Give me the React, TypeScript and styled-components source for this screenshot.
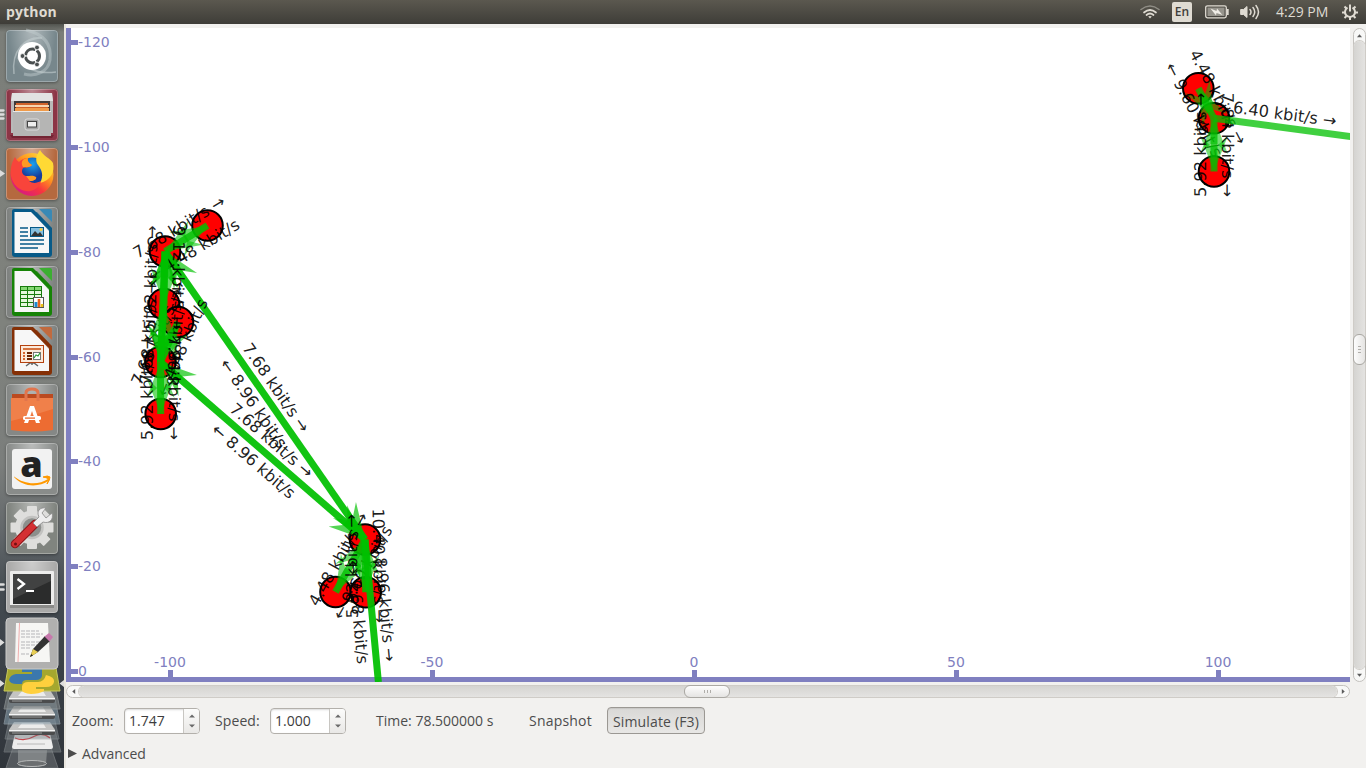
import React from "react";
import styled, { createGlobalStyle } from "styled-components";

const GlobalStyle = createGlobalStyle`
  * { box-sizing: border-box; }
  html, body { margin: 0; padding: 0; overflow: hidden; }
  body { font-family: "Open Sans", "Noto Sans", sans-serif; background: #f1f0ee; }
`;

const Desktop = styled.div`
  width: 1366px;
  height: 768px;
  display: flex;
  flex-direction: column;
  background: #f2f1ef;
  overflow: hidden;
`;

const TopBar = styled.header`
  height: 24px;
  flex: none;
  display: flex;
  justify-content: space-between;
  align-items: center;
  padding: 0 8px 0 6px;
  color: #dfdbd2;
  background: linear-gradient(#5b584f, #3e3d38);
`;

const AppTitle = styled.span`
  font: 700 14px/24px "Open Sans", sans-serif;
  letter-spacing: 0.15px;
`;

const Indicators = styled.div`
  display: flex;
  align-items: center;
  height: 24px;
`;

const Indicator = styled.span<{ $gap: number }>`
  display: flex;
  margin-left: ${(p) => p.$gap}px;
`;

const Keyboard = styled.span`
  width: 20px;
  height: 20px;
  margin-left: 12px;
  border-radius: 2px;
  background: #dfdbd2;
  color: #3f3e39;
  font: 600 12px/20px "Open Sans", sans-serif;
  text-align: center;
`;

const Clock = styled.span`
  width: 54px;
  margin-left: 15px;
  font: 400 14px/24px "Open Sans", sans-serif;
  letter-spacing: 0;
  white-space: nowrap;
`;

const Body = styled.div`
  flex: 1;
  display: flex;
  min-height: 0;
`;

const Launcher = styled.nav`
  width: 66px;
  flex: none;
  display: flex;
  flex-direction: column;
  gap: 7px;
  padding: 6px 0 0 6px;
  border-right: 2px solid #e9e6df;
  background: linear-gradient(#52544f 0, #7b7e79 8px, #7f827d 300px, #7b7e7c 440px, #62676a 510px, #444b51 570px, #3a4047 650px, #30353b 744px);
`;

const Tile = styled.div<{ $bg: string }>`
  position: relative;
  width: 52px;
  height: 52px;
  flex: none;
  border-radius: 4px;
  background: radial-gradient(ellipse at 50% 0, rgba(255,255,255,.42), rgba(255,255,255,0) 65%), ${(p) => p.$bg};
  box-shadow: inset 0 0 0 1px rgba(255,255,255,.28), 0 1px 3px rgba(0,0,0,.35);
`;

const Pips = styled.span`
  position: absolute;
  left: -6px;
  top: 20px;
  width: 5px;
  height: 14px;
  display: flex;
`;

const Folded = styled.div`
  margin: -3px 0 0 -6px;
  height: 102px;
`;

const Main = styled.main`
  flex: 1;
  display: flex;
  flex-direction: column;
  padding-top: 4px;
  min-width: 0;
`;

const ViewRow = styled.div`
  display: flex;
  height: 654px;
  gap: 3px;
`;

const Plot = styled.svg`
  width: 1284px;
  height: 654px;
  flex: none;
  background: #fff;
  font-family: "DejaVu Sans", sans-serif;
`;

const ScrollBar = styled.div<{ $vertical?: boolean }>`
  display: flex;
  flex: none;
  flex-direction: ${(p) => (p.$vertical ? "column" : "row")};
  align-items: center;
  justify-content: space-between;
  width: ${(p) => (p.$vertical ? "13px" : "1284px")};
  height: ${(p) => (p.$vertical ? "654px" : "13px")};
  margin-top: ${(p) => (p.$vertical ? "0" : "3px")};
  border: 1px solid #c3c1bd;
  border-radius: 7px;
  background: #f8f8f7;
`;

const Stepper = styled.span<{ $vertical?: boolean }>`
  display: flex;
  align-items: center;
  justify-content: center;
  flex: none;
  width: ${(p) => (p.$vertical ? "11px" : "12px")};
  height: ${(p) => (p.$vertical ? "12px" : "11px")};
`;

const Trough = styled.div<{ $vertical?: boolean }>`
  flex: 1;
  align-self: stretch;
  display: flex;
  align-items: center;
  flex-direction: ${(p) => (p.$vertical ? "column" : "row")};
  padding: ${(p) => (p.$vertical ? "293px 0 0" : "0 0 0 605px")};
  border-radius: 6px;
  background: linear-gradient(${(p) => (p.$vertical ? "to right" : "to bottom")}, #d5d4d1, #e4e3e1);
  box-shadow: 0 0 0 1px #cfccc7;
`;

const Thumb = styled.div<{ $vertical?: boolean }>`
  flex: none;
  display: flex;
  gap: 2px;
  align-items: center;
  justify-content: center;
  flex-direction: ${(p) => (p.$vertical ? "column" : "row")};
  width: ${(p) => (p.$vertical ? "13px" : "46px")};
  height: ${(p) => (p.$vertical ? "31px" : "13px")};
  margin: ${(p) => (p.$vertical ? "0 -1px" : "-1px 0")};
  border: 1px solid #aaa8a3;
  border-radius: 6px;
  background: linear-gradient(${(p) => (p.$vertical ? "to right" : "to bottom")}, #fdfdfd, #e5e4e2);
`;

const Grip = styled.i<{ $vertical?: boolean }>`
  width: ${(p) => (p.$vertical ? "3px" : "1px")};
  height: ${(p) => (p.$vertical ? "1px" : "3px")};
  background: #b0aeaa;
`;

const Controls = styled.div`
  display: flex;
  align-items: center;
  height: 27px;
  margin-top: 9px;
  padding-left: 6px;
`;

const Label = styled.span<{ $w: number; $track?: number }>`
  width: ${(p) => p.$w}px;
  font-size: 14px;
  line-height: 27px;
  color: #4c4c4c;
  letter-spacing: ${(p) => p.$track ?? 0}px;
  white-space: nowrap;
`;

const SpinBox = styled.div<{ $after: number }>`
  display: flex;
  width: 76px;
  height: 26px;
  margin-right: ${(p) => p.$after}px;
  border: 1px solid #b3b0ab;
  border-radius: 4px;
  background: #fff;
  overflow: hidden;
  box-shadow: inset 0 1px 2px rgba(0,0,0,.15);
`;

const SpinValue = styled.span`
  width: 58px;
  padding-left: 4px;
  font-size: 14px;
  line-height: 24px;
  color: #3c3c3c;
`;

const SpinButtons = styled.span`
  flex: 1;
  display: flex;
  align-items: center;
  justify-content: center;
  border-left: 1px solid #c8c6c2;
  background: linear-gradient(#fcfcfb, #e9e8e6);
`;

const SimulateButton = styled.button`
  width: 98px;
  height: 27px;
  padding: 0;
  border: 1px solid #9b9893;
  border-radius: 4px;
  background: linear-gradient(#d9d8d6, #e8e7e5);
  box-shadow: inset 0 1px 1px rgba(0,0,0,.08);
  color: #4c4c4c;
  font: 400 14px/27px "Open Sans", sans-serif;
  letter-spacing: 0.15px;
  white-space: nowrap;
`;

const Advanced = styled.div`
  display: flex;
  align-items: center;
  gap: 5px;
  height: 20px;
  margin-top: 9px;
  padding-left: 2px;
  font-size: 14px;
  color: #4c4c4c;
`;

type Pt = [number, number];
const AXIS = "#8080c0";

interface LinkSpec {
  a: Pt;
  b: Pt;
  alpha: number;
  upper?: string;
  lower?: string;
  openEnd?: boolean;
}

const nodes: Pt[] = [
  [207.5, 225.5], [165, 251.5], [164, 304], [178, 322], [160.5, 362], [160.7, 414],
  [365, 539.5], [335.5, 592], [365.7, 592.3],
  [1198.3, 88.3], [1214, 118.3], [1214, 171.5],
];

const links: LinkSpec[] = [
  { a: nodes[1], b: nodes[6], alpha: 0.93, upper: "7.68 kbit/s →", lower: "← 8.96 kbit/s" },
  { a: nodes[4], b: nodes[6], alpha: 0.93, upper: "7.68 kbit/s →", lower: "← 8.96 kbit/s" },
  { a: nodes[4], b: nodes[3], alpha: 0.8, upper: "7.68 kbit/s →", lower: "← 4.48 kbit/s" },
  { a: nodes[4], b: nodes[2], alpha: 0.85, upper: "7.68 kbit/s →", lower: "8.96 kbit/s →" },
  { a: nodes[1], b: nodes[0], alpha: 0.8, upper: "7.68 kbit/s →", lower: "← 4.48 kbit/s" },
  { a: nodes[4], b: nodes[1], alpha: 0.9 },
  { a: nodes[5], b: nodes[4], alpha: 0.8, upper: "5.92 kbit/s →", lower: "7.84 kbit/s →" },
  { a: nodes[2], b: nodes[1], alpha: 0.85, upper: "5.92 kbit/s →", lower: "9.12 kbit/s →" },
  { a: nodes[7], b: nodes[6], alpha: 0.8, upper: "4.48 kbit/s →", lower: "← 9.60 kbit/s" },
  { a: nodes[8], b: nodes[6], alpha: 0.85, upper: "5.92 kbit/s →", lower: "10.40 kbit/s →" },
  { a: nodes[6], b: [378.4, 682], alpha: 0.93, upper: "8.96 kbit/s →", lower: "← 7.68 kbit/s", openEnd: true },
  { a: nodes[9], b: nodes[10], alpha: 0.75, upper: "4.48 kbit/s →", lower: "← 9.60 kbit/s" },
  { a: nodes[11], b: nodes[10], alpha: 0.75, upper: "5.92 kbit/s →", lower: "7.84 kbit/s →" },
  { a: nodes[10], b: [1352, 136.8], alpha: 0.75, upper: "6.40 kbit/s →", openEnd: true },
];

const Head = ({ alpha }: { alpha: number }) => (
  <path d="M0 0L36 -14L26 -3.5V3.5L36 14Z" fill="#00c000" opacity={alpha * 0.72} />
);

const Link = ({ a, b, alpha, upper, lower, openEnd }: LinkSpec) => {
  const dx = b[0] - a[0];
  const dy = b[1] - a[1];
  const len = Math.hypot(dx, dy);
  const angle = (Math.atan2(dy, dx) * 180) / Math.PI;
  const flip = Math.abs(Math.abs(angle) - 90) < 3;
  return (
    <g transform={`translate(${a[0]} ${a[1]}) rotate(${angle})`}>
      <rect x="0" y="-3.5" width={len} height="7" fill="#00c000" opacity={alpha} />
      {!openEnd && <Head alpha={alpha} />}
      {!openEnd && (
        <g transform={`translate(${len} 0) rotate(180)`}>
          <Head alpha={alpha} />
        </g>
      )}
      <g fontSize="16.2" textAnchor="middle" fill="#000" fillOpacity="0.88" textRendering="geometricPrecision">
        {upper && <text x={len / 2} y="-8">{upper}</text>}
        {lower && (
          <text transform={`translate(${len / 2} ${flip ? 8 : 19.5}) rotate(${flip ? 180 : 0})`}>{lower}</text>
        )}
      </g>
    </g>
  );
};

const yTicks: [number, string][] = [
  [42.5, "-120"], [147.5, "-100"], [252.5, "-80"], [357.5, "-60"], [461.5, "-40"], [566.5, "-20"], [671.5, "0"],
];
const xTicks: [number, string][] = [
  [170.5, "-100"], [432.5, "-50"], [694.5, "0"], [956.5, "50"], [1218.5, "100"],
];

const Topology = () => (
  <Plot viewBox="66 28 1284 654">
    <g fill={AXIS} fontSize="14">
      <rect x="66" y="28" width="5" height="654" />
      <rect x="66" y="677" width="1284" height="5" />
      {yTicks.map(([y, t]) => (
        <g key={t}>
          <rect x="71" y={y - 2.5} width="7" height="5" />
          <text x="78" y={y + 4.5}>{t}</text>
        </g>
      ))}
      {xTicks.map(([x, t]) => (
        <g key={t}>
          <rect x={x - 2.5} y="670" width="5" height="7" />
          <text x={x - 0.5} y="667" textAnchor="middle">{t}</text>
        </g>
      ))}
    </g>
    {nodes.map(([x, y]) => (
      <circle key={`${x}-${y}`} cx={x} cy={y} r="15.3" fill="#f00" stroke="#000" strokeWidth="2" />
    ))}
    {links.map((l, i) => <Link key={i} {...l} />)}
  </Plot>
);

const Svg52 = ({ children }: { children: React.ReactNode }) => (
  <svg width="52" height="52" viewBox="0 0 52 52" overflow="visible" display="block">{children}</svg>
);

const DashIcon = () => (
  <Svg52>
    <path d="M8 44C5 20 20 6 36 8C24 8 14 14 12 28C20 40 34 44 50 42" fill="none" stroke="#c4cfd1" strokeWidth="1.5" opacity=".6" />
    <path d="M20 0C38 4 46 14 44 30C42 42 30 47 18 44" fill="none" stroke="#c4cfd1" strokeWidth="3" opacity=".45" />
    <circle cx="26" cy="26" r="14" fill="#fff" />
    <circle cx="26.5" cy="26" r="7" fill="none" stroke="#4a4f50" strokeWidth="3" strokeDasharray="13.2 1.4" strokeDashoffset="6.6" />
    {[[16.5, 26], [31, 17.5], [31, 34.5]].map(([x, y]) => (
      <circle key={y} cx={x} cy={y} r="2.4" fill="#4a4f50" stroke="#fff" strokeWidth=".8" />
    ))}
  </Svg52>
);

const FilesIcon = () => (
  <Svg52>
    <path d="M4 46H48L46 49H6Z" fill="#5a1522" opacity=".5" />
    <path d="M6 4H46L47 12V44H5V12Z" fill="#b9b9b9" />
    <path d="M6 4H46L47 12H5Z" fill="#e2e2e2" />
    <rect x="8" y="12" width="36" height="12" fill="#3f3a38" />
    <rect x="10" y="14" width="32" height="10" fill="#d0632a" />
    <rect x="9" y="16" width="34" height="2" fill="#f6d5b0" />
    <rect x="9" y="19" width="34" height="3" fill="#f09b4a" />
    <path d="M7 22H45V47H7Z" fill="#b5b5b4" />
    <path d="M7 22H45V23H7Z" fill="#e9e9e9" />
    <rect x="19" y="30" width="14" height="11" rx="2" fill="#a3a3a3" stroke="#dcdcdc" />
    <rect x="21.5" y="32.5" width="9" height="5.5" fill="#eee" stroke="#444" />
  </Svg52>
);

const FirefoxIcon = () => (
  <Svg52>
    <defs>
      <linearGradient id="fox" x1=".8" y1="0" x2=".1" y2=".9">
        <stop offset="0" stopColor="#ffe141" />
        <stop offset=".35" stopColor="#ff9a1e" />
        <stop offset=".65" stopColor="#f8353d" />
        <stop offset="1" stopColor="#d3178a" />
      </linearGradient>
      <radialGradient id="globe" cx=".5" cy=".25">
        <stop offset="0" stopColor="#18a4f0" />
        <stop offset="1" stopColor="#173c9b" />
      </radialGradient>
    </defs>
    <circle cx="26" cy="26.5" r="21.5" fill="url(#fox)" />
    <circle cx="26.5" cy="23" r="13.5" fill="url(#globe)" />
    <path d="M34 2C30 7 29 13 32 17C36 22 38 28 34 35C45 32 49 24 47 15C44 10 37 8 34 2Z" fill="#ffd934" />
    <path d="M9 9C6 14 4 20 5 28C7 37 13 42 20 43C28 44 34 39 35 33C31 35 27 36 23 33C28 33 31 31 30 29C26 28 23 29 20 28C16 27 15 23 17 20C20 19 24 20 26 17C23 15 21 13 22 10C18 10 15 12 13 14C11 13 10 11 9 9Z" fill="#f8443b" />
    <path d="M22 10C17 10 14 14 17 19C20 19 24 20 26 17C23 15 21 13 22 10ZM20 28C25 28 27 27 30 29C31 31 28 33 24 33Z" fill="#ff9a24" />
  </Svg52>
);

const OfficeIcon = ({ dark, fold, children }: { dark: string; fold: string; children: React.ReactNode }) => (
  <Svg52>
    <path d="M8 2H27L46 21V47Q46 50 43 50H9Q6 50 6 47V4Q6 2 8 2Z" fill={dark} />
    <path d="M8.500 5H25L43 23V46H8.500Z" fill="#f7f7f7" />
    <path d="M26 5H31L43 18V24Z" fill={dark} opacity=".65" />
    <path d="M33 2H44Q46 2 46 4V15Z" fill={fold} />
    {children}
  </Svg52>
);

const WriterIcon = () => (
  <OfficeIcon dark="#075a88" fold="#3989b5">
    <path d="M14 21H22M14 25H22M14 29H22M14 33H38M14 37H38M14 41H32" stroke="#075a88" strokeWidth="1.7" />
    <rect x="24.5" y="20.5" width="13" height="9" fill="#86bfdf" stroke="#075a88" />
    <path d="M25 29L29 24L32 27L34 25L37 29Z" fill="#333" />
    <circle cx="35" cy="22.5" r="1.5" fill="#f7cf43" />
  </OfficeIcon>
);

const CalcIcon = () => (
  <OfficeIcon dark="#168306" fold="#3cae31">
    <rect x="14" y="20" width="22" height="21" fill="#187b0d" />
    {[0, 1, 2, 3, 4].map((r) => [0, 1, 2].map((c) => (
      <rect key={`${r}${c}`} x={15 + c * 7} y={21 + r * 4} width="6" height="3" fill={r ? "#e5f7dd" : "#85d873"} />
    )))}
    <rect x="27.5" y="31.5" width="10" height="10" fill="#fff" stroke="#555" />
    <path d="M30 41V36" stroke="#1b8bd0" strokeWidth="3" />
    <path d="M33 41V33" stroke="#e8641b" strokeWidth="2.6" />
    <path d="M36 41V38" stroke="#eec21a" strokeWidth="2.6" />
  </OfficeIcon>
);

const ImpressIcon = () => (
  <OfficeIcon dark="#853006" fold="#c16a3e">
    <path d="M20 41L24 38H28L32 41M26 37V40" stroke="#666" strokeWidth="1.5" fill="none" />
    <rect x="14.5" y="20.5" width="23" height="17" fill="#fceadb" stroke="#b4420f" />
    <path d="M17 24H35" stroke="#d5733f" strokeWidth="2" />
    <path d="M17 28H19M17 31H19M17 34H19" stroke="#d5632f" strokeWidth="2" />
    <path d="M21 28H26M21 31H26M21 34H26" stroke="#6d2605" strokeWidth="2" />
    <rect x="27.5" y="27.5" width="7" height="7" fill="#fff" stroke="#777" />
    <path d="M28 33L30 30L32 31L34 28" fill="none" stroke="#2b9b34" strokeWidth="1.2" />
  </OfficeIcon>
);

const SoftwareIcon = () => (
  <Svg52>
    <path d="M6 10L47 10V18H6Z" fill="#bb4a20" />
    <path d="M5 14H47V46Q26 49 5 46Z" fill="#ed6c32" />
    <path d="M5 14H47V25Q26 32 5 37Z" fill="#f18c57" opacity=".65" />
    <path d="M20 17V9Q20 5 26 5Q32 5 32 9V17" fill="none" stroke="#e1754d" strokeWidth="3" />
    <path d="M18 39L24 22H28L34 39H30L26 27L22 39Z" fill="#fff" />
    <rect x="17" y="32" width="18" height="4" rx="1.5" fill="#fff" />
    <path d="M19 34.1H29" stroke="#ed6c32" strokeWidth="1.3" />
  </Svg52>
);

const AmazonIcon = () => (
  <Svg52>
    <rect x="6" y="6" width="40" height="40" rx="3" fill="#f2f2f2" />
    <text x="25.5" y="34" textAnchor="middle" fontFamily="Open Sans" fontWeight="800" fontSize="36" fill="#222">a</text>
    <path d="M8 33.500C19 42 33 42 42 36L43 37.500C32 45 17 44 8 34Z" fill="#ff9900" />
    <path d="M37 34Q42 32 44 34Q44 37 41 41Q43 36 42 35.500Q40 34.500 37 34Z" fill="#ff9900" stroke="#ff9900" />
  </Svg52>
);

const SettingsIcon = () => (
  <Svg52>
    {[0, 45, 90, 135].map((r) => (
      <rect key={r} x="21" y="4" width="10" height="43" rx="1" fill="#dededc" transform={`rotate(${r} 26 25.5)`} />
    ))}
    <circle cx="26" cy="25.5" r="17" fill="#dededc" />
    <circle cx="26" cy="25.5" r="10.5" fill="#8c8f8c" stroke="#c2c2c0" strokeWidth="2.5" />
    <path d="M9 42L29 22" stroke="#8f1518" strokeWidth="8.5" strokeLinecap="round" />
    <path d="M9 42L29 22" stroke="#d43033" strokeWidth="6.5" strokeLinecap="round" />
    <path d="M27 21L33 15C30 9 34 5 40 6L36 11L40 16L46 11C48 18 43 22 37 20L31 25Z" fill="#eee" stroke="#888" strokeWidth=".8" />
    <circle cx="9.5" cy="42" r="1.5" fill="#701013" />
  </Svg52>
);

const TerminalIcon = () => (
  <Svg52>
    <rect x="4" y="10" width="44" height="37" rx="1" fill="#ededec" />
    <rect x="4" y="44" width="44" height="3" fill="#8b8b89" />
    <rect x="7" y="13" width="38" height="30" fill="#2b2c2c" />
    <path d="M7 13H45V20L7 38Z" fill="#4b4c4c" opacity=".7" />
    <path d="M11.500 18L18 23L11.500 28" fill="none" stroke="#fff" strokeWidth="2.3" />
    <path d="M20 30H28" stroke="#fff" strokeWidth="2" />
  </Svg52>
);

const Triangle = ({ d, size = 5, fill = "#5b5b5b" }: { d: string; size?: number; fill?: string }) => (
  <svg width={size} height={size} viewBox="0 0 6 6"><path d={d} fill={fill} /></svg>
);

const PipMarks = ({ kind }: { kind: "one" | "two" | "three" }) => (
  <Pips>
    <svg width="5" height="14" viewBox="0 0 5 14">
      {kind === "one" && <path d="M0 2L5 5.500L0 9Z" fill="#ddd" />}
      {kind === "two" && <path d="M0 3.500H3.500M0 8.500H3.500" stroke="#ddd" strokeWidth="2.6" strokeLinecap="round" />}
      {kind === "three" && <path d="M0 1.500H3.500M0 5.500H3.500M0 9.500H3.500" stroke="#ddd" strokeWidth="2.3" strokeLinecap="round" />}
    </svg>
  </Pips>
);

const Drive = ({ y }: { y: number }) => (
  <g transform={`translate(0 ${y})`}>
    <path d="M14 1H50L55 9H9Z" fill="#c4c4c3" />
    <path d="M22 2H43L46 7H18Z" fill="#ececeb" />
    <path d="M9 9H55V12Q55 14 53 14H11Q9 14 9 12Z" fill="#4b4c4d" />
    <path d="M9 9H55V10.500H9Z" fill="#f5f5f5" />
    <path d="M12 12H42" stroke="#999" />
  </g>
);

/* The launcher's lower end, where tiles tilt away in a pile */
const FoldedTiles = () => (
  <svg width="64" height="151" viewBox="0 617 64 151" display="block">
    <path d="M14 745H50L58 768H6Z" fill="#777b7e" opacity=".5" stroke="#a5a8aa" />
    <path d="M18 750H47L46 765Q32 769 18 765Z" fill="#9da0a0" opacity=".6" />
    <ellipse cx="32" cy="763.500" rx="14.500" ry="3" fill="#6b6e70" stroke="#b8baba" />
    <path d="M10 728H54L61 752H4Z" fill="#7f8588" opacity=".45" stroke="#a1a6a9" />
    <path d="M15 733H50L53 747Q53 749 51 749H14Q12 749 12 747Z" fill="#ededed" />
    <path d="M15 738Q25 742 35 736Q42 732 50 738" fill="none" stroke="#d6262e" strokeWidth="1.300" />
    <path d="M17 744H45" stroke="#b8b8b8" />
    <path d="M11 712H53L59 739H5Z" fill="#798084" opacity=".5" stroke="#9ba2a5" />
    <Drive y={721} />
    <path d="M9 699H55L60 724H4Z" fill="#849aa8" opacity=".6" stroke="#a8b6bf" />
    <Drive y={705} />
    <path d="M9 686H55L60 709H4Z" fill="#777d7f" opacity=".7" stroke="#989e9f" />
    <Drive y={689} />
    <path d="M8 668H56L60 691H4Z" fill="#a5a72e" stroke="#c7c85d" />
    <path d="M22 669H42V676Q41 680 36 680H27Q22 680 22 684H17Q10 684 9 680Q10 675 16 674H32V672H22Z" fill="#3b78ad" />
    <path d="M46 675Q55 677 54 682Q53 687 46 687H36V689H44V691Q39 694 31 694Q22 693 22 690V686Q23 682 28 682H38Q44 682 46 675Z" fill="#ffd03d" />
    <rect x="6" y="618" width="52" height="51" rx="4" fill="#b0b0af" stroke="#cbcbca" />
    <path d="M16 623H48L50 662H15Z" fill="#f6f6f4" />
    <path d="M19.500 623L18 662" stroke="#ef9a9a" strokeWidth=".8" />
    <path d="M21 631H39M21 634H43M21 637H41M21 642H42M21 645H37M21 648H31M21 654H29" stroke="#b5b5b8" strokeWidth="1" strokeDasharray="4 1" />
    <path d="M30 657L33 649L45 636L50 641L38 652Z" fill="#333" />
    <path d="M30 657L33 649L38 652Z" fill="#e9cf54" />
    <path d="M30 657L31.300 654L33 655.500Z" fill="#222" />
    <path d="M44.500 636.500L49 633L53 637L49.500 641.500Z" fill="#c779ad" />
    <path d="M0 639L4.500 642.500L0 646ZM0 680L4.500 683.500L0 687ZM64 680L59.500 683.500L64 687Z" fill="#ddd" />
  </svg>
);

const WifiIcon = () => (
  <svg width="20" height="14" viewBox="0 0 20 14" fill="none" strokeLinecap="round">
    <path d="M1 4.500Q10 -2.500 19 4.500" stroke="#8f8d85" strokeWidth="1.500" />
    <path d="M4 7.500Q10 2.500 16 7.500" stroke="#dfdbd2" strokeWidth="1.700" />
    <path d="M6.500 10Q10 7 13.500 10" stroke="#dfdbd2" strokeWidth="1.700" />
    <path d="M8.200 11.500L10 13.500L11.800 11.500Q10 10.300 8.200 11.500Z" fill="#dfdbd2" />
  </svg>
);

const BatteryIcon = () => (
  <svg width="24" height="14" viewBox="0 0 24 14">
    <rect x=".7" y=".8" width="20.600" height="12" rx="1.800" fill="none" stroke="#dfdbd2" strokeWidth="1.300" />
    <rect x="2.500" y="2.600" width="17" height="8.400" fill="#96948c" />
    <path d="M22.800 4V10" stroke="#dfdbd2" strokeWidth="1.800" />
    <path d="M5.500 3.500L11.500 6L12 3.500L17.500 10L11.500 8L11 10.500Z" fill="#efece5" />
  </svg>
);

const SoundIcon = () => (
  <svg width="21" height="16" viewBox="0 0 21 16" fill="none" stroke="#dfdbd2" strokeWidth="1.500" strokeLinecap="round">
    <path d="M1 5.500H3.500L7 2.500V13.500L3.500 10.500H1Z" fill="#dfdbd2" strokeWidth="1" />
    <path d="M10 5.500Q12 8 10 10.500M13 3.500Q16.500 8 13 12.500M16 1.500Q21 8 16 14.500" />
  </svg>
);

const GearIcon = () => (
  <svg width="16" height="16" viewBox="0 0 16 16" fill="none" stroke="#dfdbd2">
    <path d="M5.500 3.600A5 5 0 1 0 10.500 3.600" strokeWidth="2" />
    <path d="M8 .5V7.500" strokeWidth="2" />
    <path d="M2.500 2.500L4.500 4.500M13.500 2.500L11.500 4.500M0 8.500H3M13 8.500H16M2.500 14L4.500 12M13.500 14L11.500 12M8 16V13" strokeWidth="2" />
  </svg>
);

const Spin = ({ value, after }: { value: string; after: number }) => (
  <SpinBox $after={after}>
    <SpinValue>{value}</SpinValue>
    <SpinButtons>
      <svg width="6" height="16" viewBox="0 0 6 16"><path d="M0 4.500L3 1.500L6 4.500ZM0 11.500L3 14.500L6 11.500Z" fill="#6a6a6a" /></svg>
    </SpinButtons>
  </SpinBox>
);

const tiles: { bg: string; icon: React.ReactNode; pips?: "one" | "two" | "three" }[] = [
  { bg: "#77878c", icon: <DashIcon /> },
  { bg: "#8c3546", icon: <FilesIcon />, pips: "three" },
  { bg: "#b5693f", icon: <FirefoxIcon />, pips: "one" },
  { bg: "#7f8280", icon: <WriterIcon /> },
  { bg: "#7f8280", icon: <CalcIcon /> },
  { bg: "#7f8280", icon: <ImpressIcon /> },
  { bg: "#858886", icon: <SoftwareIcon /> },
  { bg: "#898c8a", icon: <AmazonIcon /> },
  { bg: "#80847f", icon: <SettingsIcon /> },
  { bg: "#aaaaa9", icon: <TerminalIcon />, pips: "two" },
];

export default function App() {
  return (
    <Desktop>
      <GlobalStyle />
      <TopBar>
        <AppTitle>python</AppTitle>
        <Indicators>
          <Indicator $gap={0}><WifiIcon /></Indicator>
          <Keyboard>En</Keyboard>
          <Indicator $gap={13}><BatteryIcon /></Indicator>
          <Indicator $gap={11}><SoundIcon /></Indicator>
          <Clock>4:29 PM</Clock>
          <Indicator $gap={12}><GearIcon /></Indicator>
        </Indicators>
      </TopBar>
      <Body>
        <Launcher>
          {tiles.map((t, i) => (
            <Tile key={i} $bg={t.bg}>
              {t.pips && <PipMarks kind={t.pips} />}
              {t.icon}
            </Tile>
          ))}
          <Folded><FoldedTiles /></Folded>
        </Launcher>
        <Main>
          <ViewRow>
            <Topology />
            <ScrollBar $vertical>
              <Stepper $vertical><Triangle d="M0 5L3 1.500L6 5Z" /></Stepper>
              <Trough $vertical>
                <Thumb $vertical><Grip $vertical /><Grip $vertical /><Grip $vertical /></Thumb>
              </Trough>
              <Stepper $vertical><Triangle d="M0 1L3 4.500L6 1Z" /></Stepper>
            </ScrollBar>
          </ViewRow>
          <ScrollBar>
            <Stepper><Triangle d="M5 0L1.500 3L5 6Z" /></Stepper>
            <Trough>
              <Thumb><Grip /><Grip /><Grip /></Thumb>
            </Trough>
            <Stepper><Triangle d="M1 0L4.500 3L1 6Z" /></Stepper>
          </ScrollBar>
          <Controls>
            <Label $w={52}>Zoom:</Label>
            <Spin value="1.747" after={15} />
            <Label $w={55} $track={0.1}>Speed:</Label>
            <Spin value="1.000" after={30} />
            <Label $w={153}>Time: 78.500000 s</Label>
            <Label $w={78} $track={0.2}>Snapshot</Label>
            <SimulateButton>Simulate (F3)</SimulateButton>
          </Controls>
          <Advanced>
            <Triangle d="M0 0L6 3L0 6Z" size={9} fill="#4c4c4c" />
            Advanced
          </Advanced>
        </Main>
      </Body>
    </Desktop>
  );
}
